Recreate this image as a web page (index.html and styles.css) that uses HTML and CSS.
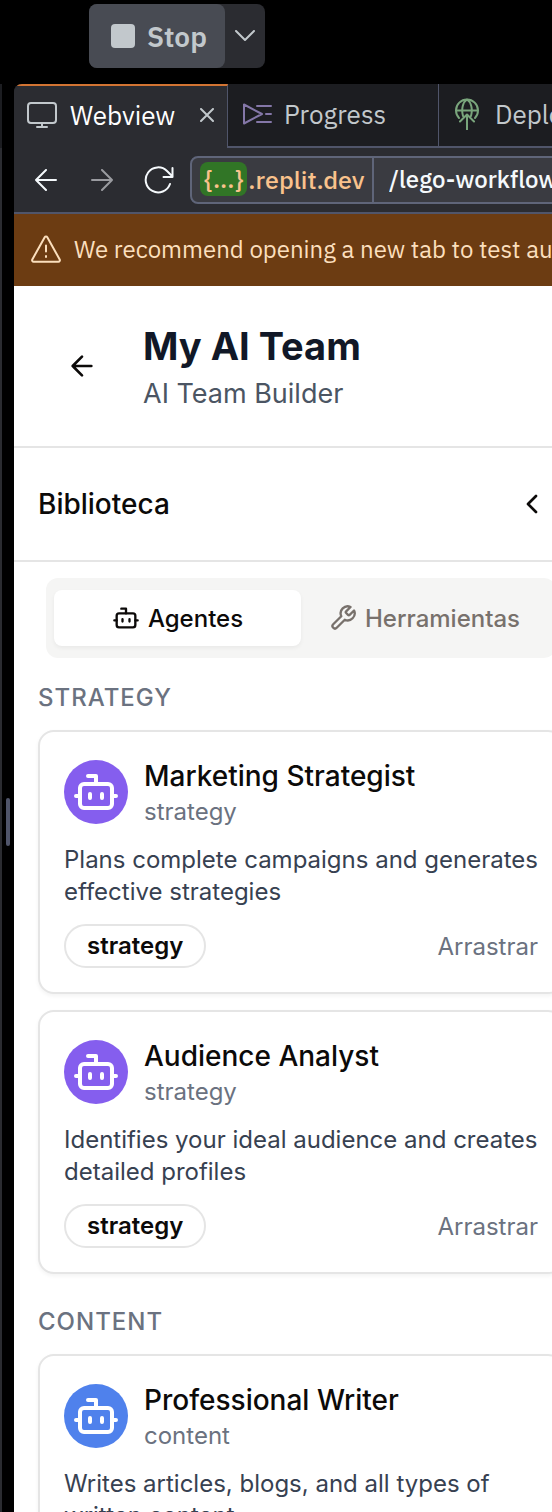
FILE: index.html
```
<!DOCTYPE html>
<html lang="es">
<head>
<meta charset="utf-8">
<meta name="viewport" content="width=device-width, initial-scale=1">
<title>My AI Team</title>
<link rel="stylesheet" href="styles.css">
</head>
<body>
<svg class="defs" aria-hidden="true">
  <symbol id="bot" viewBox="0 0 24 24"><path d="M12 8V4H8"/><rect width="16" height="12" x="4" y="8" rx="2"/><path d="M2 14h2M20 14h2M15 13v2M9 13v2"/></symbol>
  <symbol id="arrow-left" viewBox="0 0 24 24"><path d="m12 19-7-7 7-7M19 12H5"/></symbol>
</svg>
<header class="topbar">
  <div class="run">
    <button class="run-stop" type="button"><span class="stop-square"></span>Stop</button>
    <button class="run-menu" type="button" aria-label="Run options"><svg class="icon-run" viewBox="0 0 20 12"><path d="m1 1 9 9 9-9"/></svg></button>
  </div>
</header>
<div class="workspace">
  <aside class="rail"><div class="rail-pane"></div><div class="rail-handle"></div></aside>
  <div class="pane">
    <nav class="tabs">
      <div class="tab tab-active">
        <svg class="icon-monitor" viewBox="0 0 30 28"><rect x="1" y="2" width="28" height="20" rx="3"/><path d="M15 22v4M10 26h10"/></svg>
        <button class="tab-label" type="button">Webview</button>
        <button class="tab-close" type="button" aria-label="Close tab"><svg class="icon-close" viewBox="0 0 14 14"><path d="m1 1 12 12M13 1 1 13"/></svg></button>
      </div>
      <div class="tab tab-progress">
        <svg class="icon-progress" viewBox="0 0 30 22"><path d="M2 1.500v19L20 11zM15 3h14M24 11h5M15 19h14"/></svg>
        <button class="tab-label" type="button">Progress</button>
      </div>
      <div class="tab tab-deploy">
        <svg class="icon-deploy" viewBox="0 0 24 32"><path d="M4 20A11 11 0 1 1 20 20M1 12.500h22M8 18C6 11 8 4 12 1.500M16 18C18 11 16 4 12 1.500M12 31.500V17M5 23.500l7-7 7 7"/></svg>
        <button class="tab-label" type="button">Deployments</button>
      </div>
    </nav>
    <div class="toolbar">
      <button class="nav-btn" type="button" aria-label="Back"><svg class="icon-nav" viewBox="0 0 22 22"><path d="M11 1 1 11l10 10M1 11h20"/></svg></button>
      <button class="nav-btn nav-off" type="button" aria-label="Forward"><svg class="icon-nav" viewBox="0 0 22 22"><path d="m11 1 10 10-10 10M21 11H1"/></svg></button>
      <button class="nav-btn nav-reload" type="button" aria-label="Reload"><svg class="icon-reload" viewBox="0 0 30 28"><path d="M26 18A12.500 12.500 0 1 1 23 5l5 5M28.500 2v9h-9"/></svg></button>
      <div class="address">
        <div class="host"><span class="host-chip">{...}</span>.replit.dev</div>
        <input class="path" type="text" aria-label="Path" value="/lego-workflow">
      </div>
    </div>
    <div class="notice">
      <svg class="icon-warn" viewBox="0 0 30 28"><path d="M13.700 2.200 1.300 24.500a1.500 1.500 0 0 0 1.300 2.200h24.800a1.500 1.500 0 0 0 1.300-2.200L16.300 2.200a1.500 1.500 0 0 0-2.600 0zM15 10.500v6M15 21v1"/></svg>
      <span>We recommend opening a new tab to test authentication</span>
    </div>
    <main class="app">
      <div class="app-header">
        <button class="back" type="button" aria-label="Volver"><svg class="icon-back"><use href="#arrow-left"/></svg></button>
        <div>
          <h1 class="app-title">My AI Team</h1>
          <p class="app-subtitle">AI Team Builder</p>
        </div>
      </div>
      <section class="library">
        <div class="library-header">
          <h2 class="library-title">Biblioteca</h2>
          <button class="collapse" type="button" aria-label="Contraer"><svg class="icon-collapse" viewBox="0 0 24 24"><path d="m15 18-6-6 6-6"/></svg></button>
        </div>
        <div class="switch">
          <button class="switch-item switch-on" type="button"><svg class="icon-switch"><use href="#bot"/></svg>Agentes</button>
          <button class="switch-item" type="button"><svg class="icon-switch" viewBox="0 0 24 24"><path d="M14.700 6.300a1 1 0 0 0 0 1.400l1.600 1.600a1 1 0 0 0 1.400 0l3.770-3.770a6 6 0 0 1-7.940 7.940l-6.910 6.910a2.120 2.120 0 0 1-3-3l6.910-6.910a6 6 0 0 1 7.940-7.940l-3.760 3.760z"/></svg>Herramientas</button>
        </div>
        <div class="group">
          <h3 class="group-title">Strategy</h3>
          <article class="card">
            <div class="card-head">
              <div class="avatar"><svg class="icon-avatar"><use href="#bot"/></svg></div>
              <div><h4 class="card-title">Marketing Strategist</h4><p class="card-kind">strategy</p></div>
            </div>
            <p class="card-text">Plans complete campaigns and generates effective strategies</p>
            <div class="card-foot"><span class="badge">strategy</span><span class="drag">Arrastrar</span></div>
          </article>
          <article class="card">
            <div class="card-head">
              <div class="avatar"><svg class="icon-avatar"><use href="#bot"/></svg></div>
              <div><h4 class="card-title">Audience Analyst</h4><p class="card-kind">strategy</p></div>
            </div>
            <p class="card-text">Identifies your ideal audience and creates detailed profiles</p>
            <div class="card-foot"><span class="badge">strategy</span><span class="drag">Arrastrar</span></div>
          </article>
        </div>
        <div class="group">
          <h3 class="group-title">Content</h3>
          <article class="card">
            <div class="card-head">
              <div class="avatar avatar-blue"><svg class="icon-avatar"><use href="#bot"/></svg></div>
              <div><h4 class="card-title">Professional Writer</h4><p class="card-kind">content</p></div>
            </div>
            <p class="card-text">Writes articles, blogs, and all types of written content</p>
            <div class="card-foot"><span class="badge">content</span><span class="drag">Arrastrar</span></div>
          </article>
        </div>
      </section>
    </main>
  </div>
</div>
</body>
</html>
```
FILE: styles.css
```
* { box-sizing: border-box; margin: 0; }
body {
  height: 100vh;
  display: flex;
  flex-direction: column;
  overflow: hidden;
  background: #000;
  font-family: Inter, "Liberation Sans", sans-serif;
}
button, input { font: inherit; color: inherit; background: none; border: 0; padding: 0; }
svg { fill: none; stroke: currentColor; stroke-width: 2; stroke-linecap: round; stroke-linejoin: round; flex: none; display: block; }
.defs { position: absolute; width: 0; height: 0; }

.topbar { flex: none; height: 84px; padding: 4px 0 0 89px; font-family: "IBM Plex Sans", Roboto, sans-serif; }
.run { display: inline-flex; height: 64px; border-radius: 8px; background: #2b2c31; color: #c2c8cc; }
.run-stop { display: flex; align-items: center; gap: 12px; padding: 0 18px 0 22px; border-radius: 8px; background: #484b53; font-size: 28px; font-weight: 600; }
.stop-square { width: 24px; height: 24px; border-radius: 4px; background: #c2c8cc; }
.run-menu { width: 40px; display: flex; align-items: center; justify-content: center; }
.icon-run { width: 20px; height: 12px; }

.workspace { flex: 1; min-height: 0; display: flex; }
.rail { flex: none; width: 14px; display: flex; gap: 4px; }
.rail-pane { width: 2px; border-top: 64px solid #1c1d21; background: #2b2c31; }
.rail-handle { width: 4px; height: 48px; margin-top: 714px; border-radius: 2px; background: #50556a; }
.pane { flex: 1; min-width: 0; display: flex; flex-direction: column; overflow: hidden; border-top-left-radius: 8px; background: #2b2c31; }

.tabs { flex: none; display: flex; height: 64px; font-family: "IBM Plex Sans", Roboto, sans-serif; font-size: 26px; color: #c2c8cc; }
.tab { flex: none; display: flex; align-items: center; padding: 0 13px 2px; background: #1c1d21; border-right: 1px solid #50556a; border-bottom: 2px solid #50556a; }
.tab-active { width: 214px; padding-bottom: 4px; border-top: 2px solid #d27433; border-bottom: 0; background: #2b2c31; color: #fff; }
.tab-progress { width: 211px; padding-left: 14px; gap: 12px; }
.tab-deploy { flex: 1 0 auto; padding-left: 16px; gap: 16px; }
.icon-monitor { width: 30px; height: 28px; margin-right: 13px; color: #c2c8cc; }
.tab-close { margin-left: auto; color: #c2c8cc; }
.icon-close { width: 14px; height: 14px; }
.icon-progress { width: 30px; height: 22px; color: #8477a8; }
.icon-deploy { width: 24px; height: 32px; color: #79a57c; }

.toolbar { flex: none; display: flex; align-items: center; height: 66px; padding-left: 21px; border-bottom: 2px solid #50556a; font-family: "IBM Plex Sans", Roboto, sans-serif; font-size: 25px; font-weight: 500; color: #f5f9fc; }
.nav-btn { width: 22px; margin-right: 34px; display: flex; }
.nav-off { margin-right: 31px; color: #9a9ba0; }
.nav-reload { width: 30px; margin-right: 16px; }
.icon-nav { width: 22px; height: 22px; }
.icon-reload { width: 30px; height: 28px; }
.address { flex: 1; min-width: 0; display: flex; height: 48px; margin-right: -16px; border: 2px solid #5f6579; border-radius: 8px; background: #3a3b41; }
.host { flex: none; width: 182px; padding: 0 0 2px 8px; display: flex; align-items: center; border-right: 2px solid #5f6579; color: #f9c28c; }
.host-chip { padding: 0 4px; margin-right: 1px; border-radius: 8px; background: #317526; line-height: 34px; }
.path { flex: 1; min-width: 0; padding: 0 0 2px 15px; font-size: 24px; }

.notice { flex: none; display: flex; align-items: center; gap: 13px; height: 72px; padding: 0 0 2px 17px; background: #6c3c12; color: #fbdfbd; font-family: "IBM Plex Sans", Roboto, sans-serif; font-size: 24px; white-space: nowrap; }
.icon-warn { width: 30px; height: 28px; }

.app { flex: 1; min-height: 0; overflow: hidden; background: #fff; color: #0c0a09; }
.app-header { display: flex; align-items: center; padding: 32px 24px 32px 52px; border-bottom: 2px solid #e5e5e5; }
.back { width: 28px; margin-right: 49px; }
.icon-back { width: 32px; height: 32px; }
.app-title { font-size: 38px; line-height: 56px; font-weight: 700; color: #111827; }
.app-subtitle { font-size: 27px; line-height: 40px; color: #4b5563; }

.library { margin-right: -36px; }
.library-header { display: flex; align-items: center; justify-content: space-between; height: 114px; padding: 0 40px 0 24px; border-bottom: 2px solid #e5e5e5; }
.library-title { font-size: 28px; font-weight: 500; }
.icon-collapse { width: 32px; height: 32px; }
.switch { display: grid; grid-template-columns: 1fr 1fr; margin: 16px 32px 20px; padding: 12px 8px; border-radius: 12px; background: #f5f5f4; }
.switch-item { display: flex; align-items: center; justify-content: center; gap: 8px; height: 56px; border-radius: 8px; color: #78716c; font-size: 24px; font-weight: 500; }
.switch-on { background: #fff; color: #0c0a09; box-shadow: 0 2px 4px #0000000d; }
.icon-switch { width: 28px; height: 28px; }
.group { display: flex; flex-direction: column; gap: 16px; padding: 0 24px; margin-bottom: 28px; }
.group-title { font-size: 24px; line-height: 40px; font-weight: 500; letter-spacing: 1px; text-transform: uppercase; color: #6b7280; margin-bottom: -4px; }
.card { padding: 24px; border: 2px solid #e5e5e5; border-radius: 16px; background: #fff; box-shadow: 0 2px 4px #0000000d; }
.card-head { display: flex; align-items: center; gap: 16px; margin-bottom: 16px; }
.avatar { width: 64px; height: 64px; display: flex; align-items: center; justify-content: center; border-radius: 50%; background: #855eee; color: #fff; }
.avatar-blue { background: #4f81ec; }
.icon-avatar { width: 48px; height: 48px; }
.card-title { font-size: 28px; line-height: 40px; font-weight: 500; }
.card-kind { font-size: 24px; line-height: 32px; color: #6b7280; }
.card-text { font-size: 24px; line-height: 32px; color: #374151; }
.card-foot { display: flex; align-items: center; justify-content: space-between; margin-top: 16px; font-size: 24px; }
.badge { padding: 0 21px; border: 2px solid #e5e5e5; border-radius: 22px; line-height: 40px; font-weight: 600; }
.drag { color: #6b7280; }
```
